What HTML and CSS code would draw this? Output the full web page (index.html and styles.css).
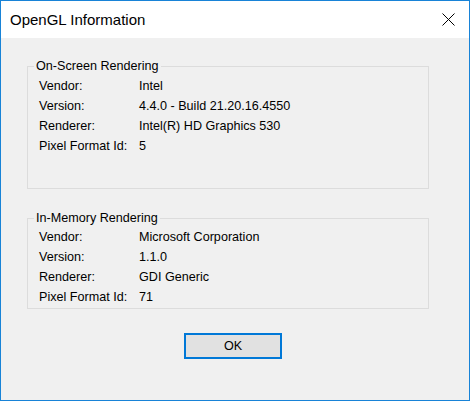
FILE: index.html
```html
<!DOCTYPE html>
<html lang="en">
<head>
<meta charset="utf-8">
<title>OpenGL Information</title>
<link rel="stylesheet" href="styles.css">
</head>
<body>
<div class="window">
  <div class="titlebar">
    <span class="title">OpenGL Information</span>
    <svg class="close" width="13" height="13" viewBox="0 0 13 13" aria-label="Close">
      <path d="M0.5 0.5 L12.5 12.5 M12.5 0.5 L0.5 12.5" stroke="#000" stroke-width="1" fill="none"/>
    </svg>
  </div>
  <div class="content">
    <fieldset class="group group-screen">
      <legend>On-Screen Rendering</legend>
      <div class="rows">
        <span>Vendor:</span><span>Intel</span>
        <span>Version:</span><span>4.4.0 - Build 21.20.16.4550</span>
        <span>Renderer:</span><span>Intel(R) HD Graphics 530</span>
        <span>Pixel Format Id:</span><span>5</span>
      </div>
    </fieldset>
    <fieldset class="group group-memory">
      <legend>In-Memory Rendering</legend>
      <div class="rows">
        <span>Vendor:</span><span>Microsoft Corporation</span>
        <span>Version:</span><span>1.1.0</span>
        <span>Renderer:</span><span>GDI Generic</span>
        <span>Pixel Format Id:</span><span>71</span>
      </div>
    </fieldset>
    <div class="footer">
      <button class="ok">OK</button>
    </div>
  </div>
</div>
</body>
</html>
```
FILE: styles.css
```css
html, body {
  margin: 0;
  padding: 0;
  background: #ffffff;
}

.window {
  width: 470px;
  height: 401px;
  box-sizing: border-box;
  border: 1px solid #1883d7;
  background: #f0f0f0;
  display: flex;
  flex-direction: column;
  font-family: "Liberation Sans", Arial, sans-serif;
  font-size: 12.6px;
  color: #000;
}

.titlebar {
  height: 37px;
  flex: none;
  background: #ffffff;
  display: flex;
  align-items: center;
  justify-content: space-between;
}

.title {
  font-size: 15px;
  padding-left: 9px;
  color: #000;
}

.close {
  display: block;
  margin-right: 14px;
}

.content {
  flex: 1;
  display: flex;
  flex-direction: column;
}

.group {
  margin: 0 40px 0 26px;
  padding: 0;
  border: 1px solid #dcdcdc;
  min-inline-size: 0;
}

.group legend {
  margin-left: 6px;
  padding: 0 2px;
  line-height: 15px;
}

.group-screen {
  margin-top: 21px;
}

.group-screen .rows {
  padding-top: 2px;
  padding-bottom: 32px;
}

.group-memory {
  margin-top: 22px;
}

.group-memory .rows {
  padding-top: 1px;
  padding-bottom: 1px;
}

.rows {
  display: grid;
  grid-template-columns: 100px 1fr;
  line-height: 20px;
  padding-left: 11px;
  white-space: nowrap;
}

.footer {
  display: flex;
  padding-left: 183px;
  margin-top: 24px;
}

.ok {
  width: 98px;
  height: 26px;
  box-sizing: border-box;
  border: 2px solid #0078d7;
  background: #e1e1e1;
  font-family: "Liberation Sans", Arial, sans-serif;
  font-size: 12.6px;
  color: #000;
  padding: 0;
  margin: 0;
}
```
